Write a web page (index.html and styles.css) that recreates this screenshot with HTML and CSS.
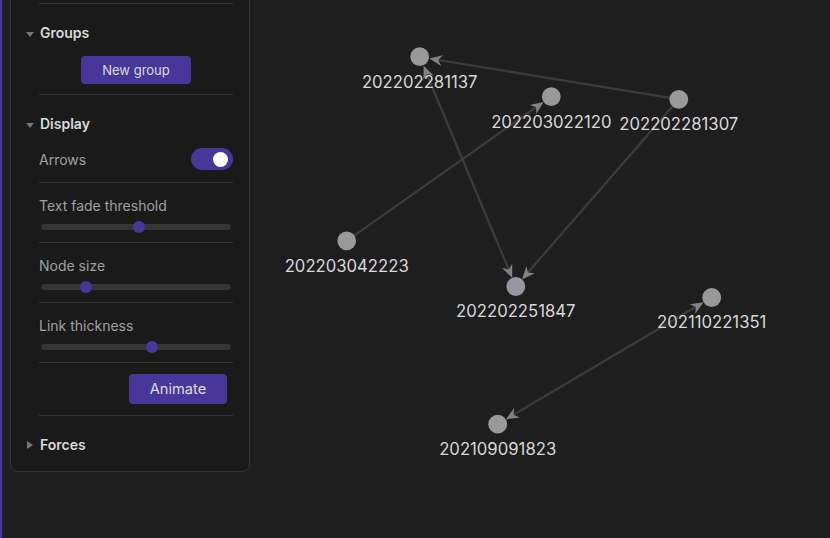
FILE: index.html
```html
<!DOCTYPE html>
<html>
<head>
<meta charset="utf-8">
<link rel="stylesheet" href="styles.css">
</head>
<body>
<div class="app">
  <svg class="graph" width="830" height="538" viewBox="0 0 830 538" xmlns="http://www.w3.org/2000/svg">
    <defs>
      <polygon id="ah" points="0,0 -13,-5.5 -9,0 -13,5.5"/>
    </defs>
    <g class="links">
      <line x1="678.8" y1="99.3" x2="432" y2="59"/>
      <line x1="346.7" y1="240.8" x2="540" y2="104.5"/>
      <line x1="425" y1="70" x2="511" y2="275"/>
      <line x1="678.8" y1="99.3" x2="524" y2="277"/>
      <line x1="508" y1="418" x2="701" y2="303.8"/>
    </g>
    <g class="arrows">
      <use href="#ah" transform="translate(429.3,58.5) rotate(189.2)"/>
      <use href="#ah" transform="translate(543.6,102.1) rotate(-35.16)"/>
      <use href="#ah" transform="translate(512.2,277.8) rotate(67.34)"/>
      <use href="#ah" transform="translate(522,279.4) rotate(131.05)"/>
      <use href="#ah" transform="translate(703.6,302.3) rotate(-30.63)"/>
      <use href="#ah" transform="translate(505.8,419.4) rotate(149.37)"/>
      <use href="#ah" transform="translate(423.6,65.7) rotate(247.34)"/>
    </g>
    <g class="nodes">
      <circle cx="419.7" cy="56.7" r="9.4"/>
      <circle cx="551.3" cy="96.7" r="9.4"/>
      <circle cx="678.8" cy="99.3" r="9.4"/>
      <circle cx="346.7" cy="240.8" r="9.4"/>
      <circle class="cur" cx="515.8" cy="286.5" r="9.4"/>
      <circle cx="711.7" cy="297.5" r="9.4"/>
      <circle cx="497.7" cy="424.2" r="9.4"/>
    </g>
    <g class="labels">
      <text x="419.7" y="87.7">202202281137</text>
      <text x="551.3" y="127.6">202203022120</text>
      <text x="678.8" y="130">202202281307</text>
      <text x="346.7" y="271.7">202203042223</text>
      <text x="515.8" y="317.3">202202251847</text>
      <text x="711.7" y="328.3">202110221351</text>
      <text x="497.7" y="455">202109091823</text>
    </g>
  </svg>

  <div class="edge-bar"></div>

  <aside class="panel">
    <div class="sep first"></div>

    <div class="head groups-head"><span class="tri down"></span>Groups</div>
    <div class="body center">
      <button class="btn new-group">New group</button>
    </div>

    <div class="sep after-btn"></div>

    <div class="head display-head"><span class="tri down"></span>Display</div>
    <div class="body row toggle-row">
      <span class="label">Arrows</span>
      <span class="toggle"><span class="knob"></span></span>
    </div>

    <div class="sep"></div>

    <div class="body slider-item">
      <div class="label">Text fade threshold</div>
      <div class="track"><span class="thumb" style="--v:51.6%"></span></div>
    </div>
    <div class="sep"></div>

    <div class="body slider-item">
      <div class="label">Node size</div>
      <div class="track"><span class="thumb" style="--v:23.7%"></span></div>
    </div>
    <div class="sep"></div>

    <div class="body slider-item">
      <div class="label">Link thickness</div>
      <div class="track"><span class="thumb" style="--v:58.4%"></span></div>
    </div>
    <div class="sep"></div>

    <div class="body right">
      <button class="btn animate">Animate</button>
    </div>
    <div class="sep after-animate"></div>

    <div class="head forces-head"><span class="tri right"></span>Forces</div>
  </aside>
</div>
</body>
</html>
```

FILE: styles.css
```css
* { box-sizing: border-box; }

html, body {
  margin: 0;
  padding: 0;
  background: #1e1e1e;
}

body {
  font-family: Inter, "Noto Sans", "Liberation Sans", sans-serif;
}

.app {
  position: relative;
  width: 830px;
  height: 538px;
  overflow: hidden;
  background: #1e1e1e;
}

.graph {
  display: block;
}

.links line {
  stroke: #3c3c3c;
  stroke-width: 2.2;
}

.arrows use {
  fill: #838383;
}

.nodes circle {
  fill: #999999;
}

.nodes circle.cur {
  fill: #9797a3;
}

.labels text {
  fill: #d9d9d9;
  font-family: Inter, "Noto Sans", sans-serif;
  font-size: 16.7px;
  text-anchor: middle;
}

.edge-bar {
  position: absolute;
  left: 0;
  top: 0;
  width: 2px;
  height: 100%;
  background: #483699;
}

.panel {
  position: absolute;
  left: 10px;
  top: -10px;
  width: 240px;
  background: #1a1a1a;
  border: 1px solid #353535;
  border-radius: 8px;
  padding: 0 16px 16px 15px;
}

.sep {
  height: 1px;
  background: #353535;
  margin-left: 13px;
  margin-top: 12px;
}

.sep.after-btn { margin-top: 10px; }
.sep.after-animate { margin-top: 11px; }

.head {
  display: flex;
  align-items: center;
  height: 20px;
  line-height: 20px;
  font-size: 14px;
  font-weight: 600;
  color: #dadada;
  margin-top: 19px;
}

.tri {
  display: inline-block;
  width: 0;
  height: 0;
  margin-right: 6px;
}

.tri.down {
  border-left: 4px solid transparent;
  border-right: 4px solid transparent;
  border-top: 5px solid #777777;
  margin-top: 2px;
}

.tri.right {
  border-top: 4px solid transparent;
  border-bottom: 4px solid transparent;
  border-left: 6px solid #777777;
  margin-left: 1px;
  margin-right: 7px;
}

.body {
  margin-left: 13px;
}

.body.center {
  display: flex;
  justify-content: center;
  margin-top: 13px;
}

.body.right {
  display: flex;
  justify-content: flex-end;
  margin-top: 11px;
  padding-right: 6px;
}

.btn {
  border: none;
  background: #483699;
  color: #dcdcdc;
  font-family: Inter, "Noto Sans", sans-serif;
  border-radius: 4px;
  padding: 0;
  cursor: pointer;
}

.btn.new-group {
  width: 110px;
  height: 28px;
  font-size: 13px;
}

.btn.animate {
  width: 98px;
  height: 30px;
  font-size: 14.7px;
}

.row {
  display: flex;
  align-items: center;
  justify-content: space-between;
}

.toggle-row {
  height: 22px;
  margin-top: 14px;
}

.label {
  font-size: 14px;
  line-height: 16px;
  color: #a0a0a0;
}

.toggle-row .label {
  margin-top: 2px;
}

.toggle {
  position: relative;
  width: 42px;
  height: 22px;
  border-radius: 11px;
  background: #483699;
}

.knob {
  position: absolute;
  right: 5px;
  top: 3.5px;
  width: 15px;
  height: 15px;
  border-radius: 50%;
  background: #ffffff;
}

.slider-item .label {
  margin-top: 15px;
}

.track {
  position: relative;
  height: 6px;
  margin: 10px 2px 0 2px;
  border-radius: 3px;
  background: #353535;
}

.thumb {
  position: absolute;
  top: -3px;
  left: calc(var(--v) - 6px);
  width: 12px;
  height: 12px;
  border-radius: 50%;
  background: #483699;
}
```
